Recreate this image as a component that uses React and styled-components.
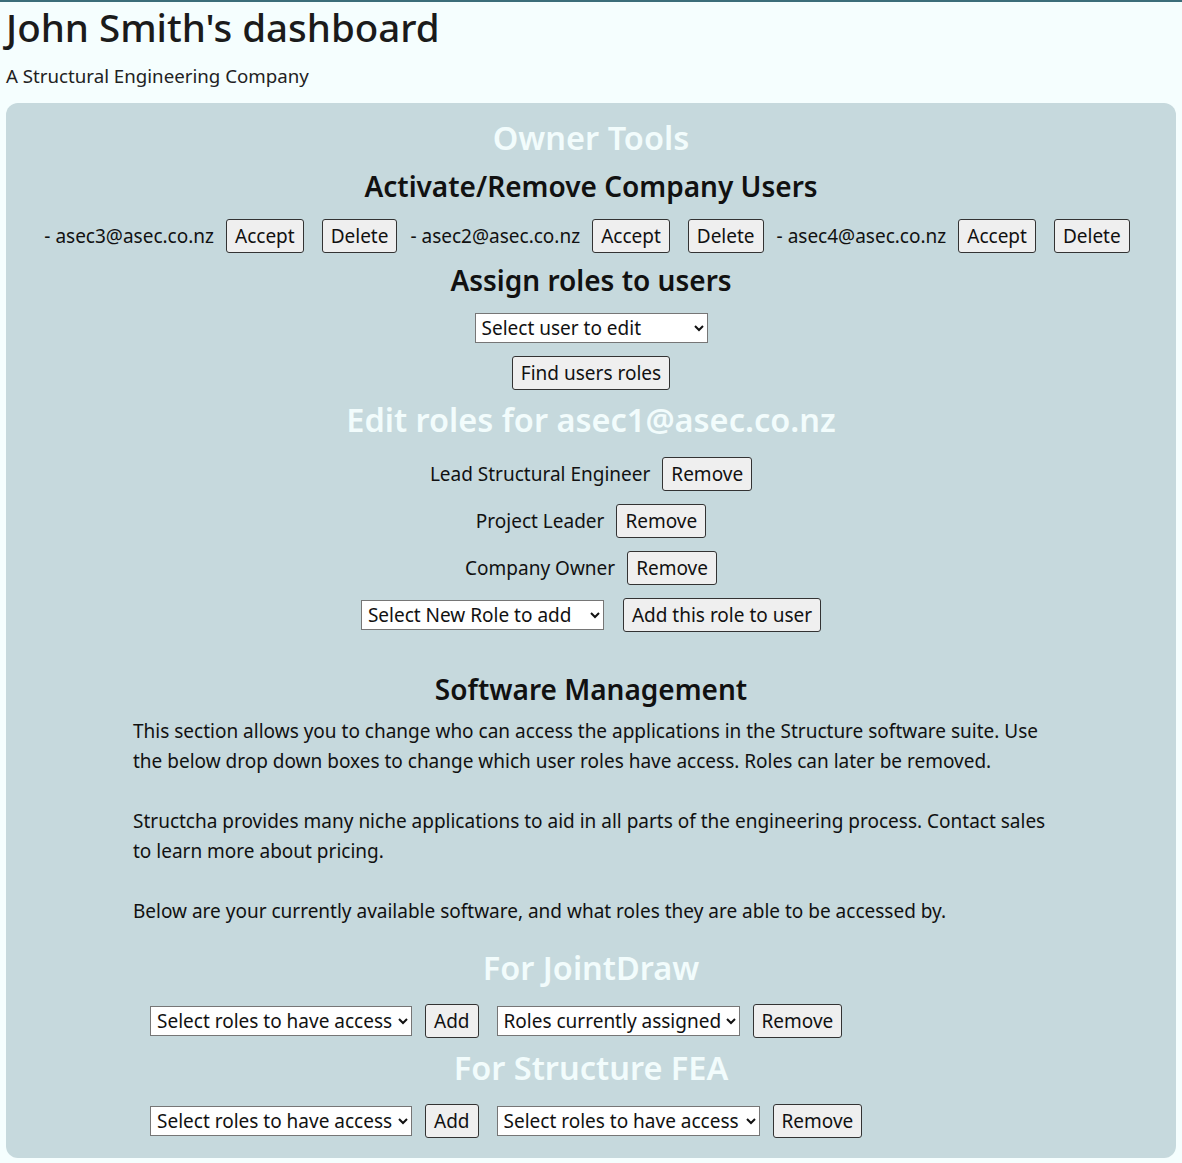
import React from "react"
import styled, { createGlobalStyle } from "styled-components"

const users = ["asec3@asec.co.nz", "asec2@asec.co.nz", "asec4@asec.co.nz"]
const roles = ["Lead Structural Engineer", "Project Leader", "Company Owner"]
const apps = [
  { name: "JointDraw", current: "Roles currently assigned", currentWidth: 243 },
  { name: "Structure FEA", current: "Select roles to have access", currentWidth: 263 },
]

const App = () => {
  return (
    <>
      <GlobalStyle />
      <Page>
        <Header>
          <Title>John Smith's dashboard</Title>
          <Subtitle>A Structural Engineering Company</Subtitle>
        </Header>
        <Panel>
          <LightHeading>Owner Tools</LightHeading>
          <DarkHeading>Activate/Remove Company Users</DarkHeading>
          <UserRow>
            {users.map(u => (
              <UserEntry key={u}>
                <span>- {u}</span>
                <Button>Accept</Button>
                <Button>Delete</Button>
              </UserEntry>
            ))}
          </UserRow>
          <DarkHeading>Assign roles to users</DarkHeading>
          <Stack>
            <Select $width={233}>
              <option>Select user to edit</option>
            </Select>
            <Button>Find users roles</Button>
          </Stack>
          <LightHeading>Edit roles for asec1@asec.co.nz</LightHeading>
          <RoleList>
            {roles.map(r => (
              <RoleRow key={r}>
                <span>{r}</span>
                <Button>Remove</Button>
              </RoleRow>
            ))}
            <RoleRow $wide>
              <Select $width={243}>
                <option>Select New Role to add</option>
              </Select>
              <Button>Add this role to user</Button>
            </RoleRow>
          </RoleList>
          <DarkHeading $spaced>Software Management</DarkHeading>
          <Content>
            <Description>
              <p>
                This section allows you to change who can access the applications in the Structure
                software suite. Use the below drop down boxes to change which user roles have access.
                Roles can later be removed.
              </p>
              <p>
                Structcha provides many niche applications to aid in all parts of the engineering
                process. Contact sales to learn more about pricing.
              </p>
              <p>Below are your currently available software, and what roles they are able to be accessed by.</p>
            </Description>
            {apps.map(a => (
              <AppBlock key={a.name}>
                <LightHeading>For {a.name}</LightHeading>
                <AppRow>
                  <Pair>
                    <Select $width={262}>
                      <option>Select roles to have access</option>
                    </Select>
                    <Button>Add</Button>
                  </Pair>
                  <Pair>
                    <Select $width={a.currentWidth}>
                      <option>{a.current}</option>
                    </Select>
                    <Button>Remove</Button>
                  </Pair>
                </AppRow>
              </AppBlock>
            ))}
          </Content>
        </Panel>
      </Page>
    </>
  )
}

const GlobalStyle = createGlobalStyle`
  body {
    margin: 0;
    background: #f5fefe;
    border-top: 2px solid #3c6d79;
    font-family: "Noto Sans", "Open Sans", sans-serif;
    color: #111;
  }
`

const Page = styled.div`
  padding: 0 6px 5px;
`

const Header = styled.header`
  padding-bottom: 14px;
`

const Title = styled.h1`
  margin: 0;
  font-size: 38.5px;
  font-weight: 500;
  line-height: 50px;
  color: #1b1b1b;
`

const Subtitle = styled.div`
  font-size: 18.7px;
  line-height: 26px;
  margin-top: 11px;
  color: #222;
`

const Panel = styled.main`
  background: #c6d9dd;
  border-radius: 12px;
  padding: 13px 0 20px;
  text-align: center;
  font-size: 19px;
`

const LightHeading = styled.h2`
  margin: 0;
  font-size: 32.5px;
  font-weight: 600;
  line-height: 44px;
  color: #f2fcfc;
`

const DarkHeading = styled.h3`
  margin: ${p => (p.$spaced ? "31px 0 0" : "0")};
  font-size: 28px;
  font-weight: 600;
  line-height: 52px;
  color: #111;
`

const UserRow = styled.div`
  display: flex;
  justify-content: center;
  flex-wrap: wrap;
  gap: 13px;
  margin: 7px 0 1px;
  padding-right: 8px;
`

const UserEntry = styled.div`
  display: flex;
  align-items: center;
  gap: 12px;

  & > button + button {
    margin-left: 6px;
  }
`

const Button = styled.button`
  font-family: inherit;
  font-size: 19px;
  color: #111;
  background: #efefef;
  border: 1px solid #333;
  border-radius: 3px;
  height: 34px;
  padding: 0 8px;
`

const Select = styled.select`
  font-family: inherit;
  font-size: 19px;
  color: #111;
  background: #fff;
  border: 1px solid #767676;
  border-radius: 0;
  height: 30px;
  width: ${p => p.$width}px;
  padding: 0 2px;
`

const Stack = styled.div`
  display: flex;
  flex-direction: column;
  align-items: center;
  gap: 13px;
  padding: 7px 0 8px;
`

const RoleList = styled.div`
  display: flex;
  flex-direction: column;
  align-items: center;
  gap: 13px;
  padding-top: 15px;
`

const RoleRow = styled.div`
  display: flex;
  align-items: center;
  gap: ${p => (p.$wide ? "19px" : "12px")};
`

const Content = styled.div`
  width: 916px;
  margin: 1px auto 0;
`

const Description = styled.div`
  text-align: left;
  line-height: 30px;

  p {
    margin: 0 0 30px;
  }
  p:last-child {
    margin-bottom: 20px;
  }
`

const AppBlock = styled.section`
  & + & {
    margin-top: 8px;
  }
`

const AppRow = styled.div`
  display: flex;
  align-items: center;
  gap: 18px;
  margin-top: 14px;
  padding-left: 17px;
`

const Pair = styled.div`
  display: flex;
  align-items: center;
  gap: 13px;
`

export default App
